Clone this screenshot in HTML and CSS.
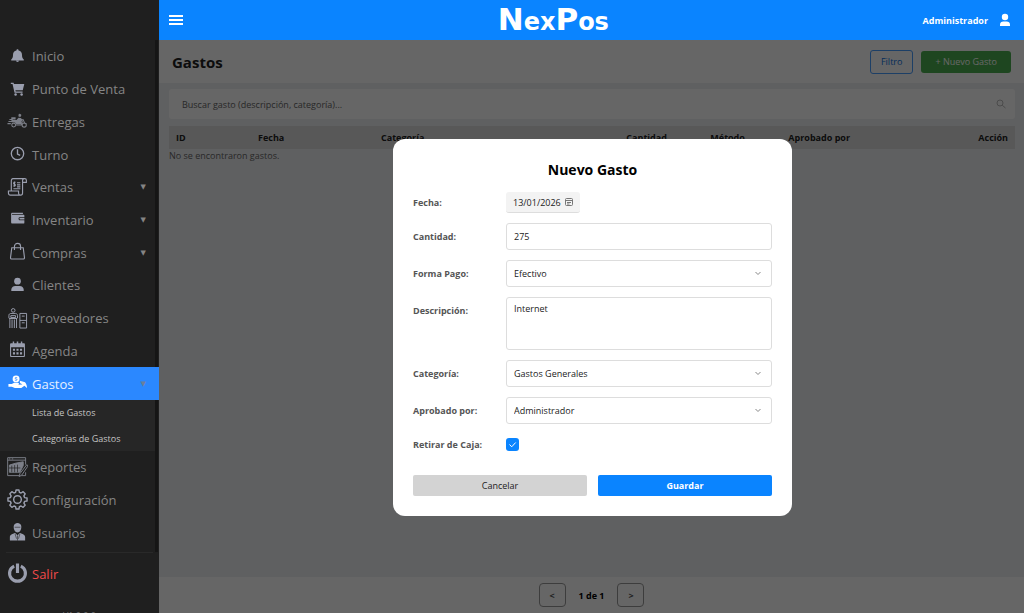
FILE: index.html
```html
<!DOCTYPE html>
<html lang="es">
<head>
    <meta charset="UTF-8">
    <meta name="viewport" content="width=device-width, initial-scale=1.0">
    <title>NexPos - Gastos</title>
    <link rel="stylesheet" href="styles.css">
</head>
<body>

    <aside class="sidebar">
        <nav class="menu">
            <a href="#" class="menu-item">
                <svg class="icon" viewBox="0 0 22 22"><path fill="currentColor" d="M11 3.500c.7 0 1.100.5 1.100 1.100 2.400.5 3.600 2.300 3.600 4.600 0 2.700.7 3.900 1.900 5v1H4.400v-1c1.200-1.100 1.900-2.300 1.900-5 0-2.300 1.200-4.100 3.600-4.600 0-.6.4-1.100 1.100-1.100zM9.500 15.500h3c0 .8-.6 1.200-1.500 1.200s-1.500-.4-1.500-1.200z"/></svg>
                <span>Inicio</span>
            </a>
            <a href="#" class="menu-item">
                <svg class="icon" viewBox="0 0 22 22"><path fill="currentColor" d="M4 4h2.900l.4 1.300h10.800l-1.600 6.500H8.800l.3 1.300h7.200v1.400H7.900L5.800 5.300H4z"/><circle cx="9" cy="16.300" r="1.300" fill="currentColor"/><circle cx="15.300" cy="16.300" r="1.300" fill="currentColor"/></svg>
                <span>Punto de Venta</span>
            </a>
            <a href="#" class="menu-item">
                <svg class="icon dim" viewBox="0 0 22 22"><g fill="none" stroke="currentColor" stroke-width="1.100"><circle cx="7" cy="14.700" r="2"/><circle cx="18" cy="14.700" r="2.200"/><path d="M1.500 11h5M2.500 9h3.500M.5 13.200h3.500M9.500 14.700h5.500l1-4-1.500-1.500M15 9.200h2l1.500 3.500 2 .8"/></g><path fill="currentColor" d="M3.500 11.500 5 9.500h5l2-2.500 2.500.3 2 2-2 .2 1 2.500-.5 2H9.700C9.400 12.300 8 11.800 6 11.800zM12 4.200a1.500 1.500 0 1 1 2.800 1l-1 1.100-1.700-.6zM4.500 6.500h4.500V9H4.500z"/></svg>
                <span>Entregas</span>
            </a>
            <a href="#" class="menu-item">
                <svg class="icon" viewBox="0 0 22 22" fill="none" stroke="currentColor" stroke-width="1.400"><circle cx="11" cy="10" r="6.500"/><path d="M11 5.500V10.500l2.800 1.500"/></svg>
                <span>Turno</span>
            </a>
            <a href="#" class="menu-item">
                <svg class="icon" viewBox="0 0 22 22" fill="none" stroke="currentColor" stroke-width="1.200"><path d="M4.500 14.500V4.200c0-1.300.6-2.500 1.700-2.500h12.300c1.200 0 1.800.8 1.800 1.700v2.300h-4V4c0-1 .5-2.300 1.700-2.300M16.300 5.700v11c0 1.500-.7 2.300-2 2.300H3.500c-1.200 0-2-.9-2-2.300v-2h10.600V17c0 1.300.9 2 2 2"/><path d="M9 5.500c-2.200-.4-2.700 1.500-1.200 2 1.600.5 1 2.300-1.200 1.800M7.800 4.700v5.500M10.500 6H14M10.500 8.300H14M6.700 12.300H14M10.500 10.300H14"/></svg>
                <span>Ventas</span>
                <span class="arrow">▼</span>
            </a>
            <a href="#" class="menu-item">
                <svg class="icon" viewBox="0 0 22 22"><path fill="currentColor" d="M5.500 4h11.200v1.300H5.300V6h12.200c.4 0 .7.300.7.700v1.700h-4.200c-1.300 0-1.900.8-1.900 1.700s.6 1.700 1.900 1.700h4.200v2.600c0 .6-.3.900-.9.900H5.600c-.8 0-1.300-.5-1.300-1.300V5.300c0-.8.500-1.300 1.200-1.300z"/><path fill="currentColor" d="M14 9.200h4.200v1.800H14c-1.300 0-1.300-1.800 0-1.800z"/></svg>
                <span>Inventario</span>
                <span class="arrow">▼</span>
            </a>
            <a href="#" class="menu-item">
                <svg class="icon" viewBox="0 0 22 22" fill="none" stroke="currentColor" stroke-width="1.200"><path d="M5 6h12l1.300 10.200c.1 1-.4 1.600-1.200 1.600H4.900c-.8 0-1.300-.6-1.200-1.600zM7.800 8.500V4.500c0-4 6.400-4 6.400 0v4"/></svg>
                <span>Compras</span>
                <span class="arrow">▼</span>
            </a>
            <a href="#" class="menu-item">
                <svg class="icon" viewBox="0 0 22 22" fill="currentColor"><circle cx="11" cy="6.500" r="3.500"/><path d="M4.500 16.700v-1.300c0-2.700 1.900-4 4.200-4h4.600c2.300 0 4.200 1.300 4.200 4v1.300z"/></svg>
                <span>Clientes</span>
            </a>
            <a href="#" class="menu-item">
                <svg class="icon" viewBox="0 0 22 22" fill="none" stroke="currentColor"><circle cx="6.500" cy="2.500" r="1.900"/><path d="M3 21v-9.500l-1-1V7.700c0-1.200 1-2 2-2h5c1 0 2 .8 2 2v2.800l-1 1V21M5.300 12v9M7.700 12v9M2.500 11h8M4 8h5v2H4zM13.500 5.700h7V21h-7zM13.500 13h7M15.500 8.500h3M15.500 15.500h3"/></svg>
                <span>Proveedores</span>
            </a>
            <a href="#" class="menu-item">
                <svg class="icon" viewBox="0 0 22 22"><path fill="currentColor" fill-rule="evenodd" d="M4.500 3.500H6V1.700h1.500v1.800h2.700V1.700h1.600v1.800h2.700V1.700H16v1.800h1.500c.9 0 1.300.5 1.300 1.300v11.700c0 .8-.5 1.300-1.300 1.300h-13c-.8 0-1.300-.5-1.300-1.300V4.800c0-.8.500-1.300 1.300-1.300zm-.2 4v8.700c0 .3.200.5.500.5h12.400c.3 0 .5-.2.500-.5V7.500z"/><path stroke="currentColor" stroke-width="2.200" stroke-dasharray="2.200 1.500" d="M6.200 10.200h9.600M6.200 14h9.600"/></svg>
                <span>Agenda</span>
            </a>
            <a href="#" class="menu-item active">
                <svg class="icon" viewBox="0 0 22 22"><path fill="currentColor" d="M1.500 11.500h3.500l2.500-1.300h3.700c1.500 0 2 1.700.5 2.100l3.800-.3 2.800-1.800c1.700.3 2.700 2.800 2.700 5.500l-2.800-2.300-3.200 2.300H8.200L5 14.500H1.500z"/><path fill="currentColor" d="m13.500 8 5.500 1.800 1.300 3-3-.3-3.800-2z"/><circle cx="9.500" cy="6.200" r="3.600" fill="currentColor"/><path fill="none" stroke="#2b88ff" stroke-width=".8" d="M10.700 4.900c-2.500-.7-3.200.9-1.200 1.300s1.200 2-1.200 1.300"/></svg>
                <span>Gastos</span>
                <span class="arrow">▼</span>
            </a>
            <div class="submenu">
                <a href="#">Lista de Gastos</a>
                <a href="#">Categorías de Gastos</a>
            </div>
            <a href="#" class="menu-item">
                <svg class="icon dim" viewBox="0 0 22 22" fill="none" stroke="currentColor"><path d="M19.500 8V.7H.7v18.800h18.800V16M.7 3.300h18.800M2 2h1.500M5 2h1.500"/><path fill="currentColor" d="M2.500 8.500 9 6.500l8-1.500v4l-3.500 7h-11z"/><path stroke="#1f1f1f" stroke-width=".7" d="M5 9v7M8 8.500V16M11 8v8M2 11.500h12"/><path fill="#1f1f1f" d="m20.800 8-7.300 9.500-.8 3 2.700-1.500 6.400-9.300z"/></svg>
                <span>Reportes</span>
            </a>
            <a href="#" class="menu-item">
                <svg class="icon" viewBox="0 0 22 22" fill="none" stroke="currentColor" stroke-width="1.500" stroke-linejoin="round"><circle cx="11" cy="11" r="4"/><path d="M9 3.500 9.500 1h3l.5 2.500 1.700.7 2.200-1.400L19 5l-1.300 2.200.7 1.800 2.600.5v3l-2.600.5-.7 1.800L19 17l-2.100 2.200-2.200-1.400-1.700.7-.5 2.500h-3L9 18.500l-1.700-.7-2.200 1.400L3 17l1.300-2.200-.7-1.800-2.600-.5v-3L3.600 9l.7-1.800L3 5l2.100-2.200 2.200 1.400z"/></svg>
                <span>Configuración</span>
            </a>
            <a href="#" class="menu-item">
                <svg class="icon" viewBox="0 0 22 22"><path fill="currentColor" d="M7 5c0-5.200 8-5.200 8 0 0 3.300-1.700 6-4 6S7 8.300 7 5z"/><path fill="currentColor" d="M3 19.500V16c0-2.700 2.700-3.500 5.500-4.400L11 13.800l2.500-2.200c2.800.9 5.500 1.700 5.500 4.400v3.500z"/><path stroke="#1f1f1f" stroke-width=".6" fill="none" d="M8 5.500h6M11 14v5.500M8.500 12.500l1.500 5M13.500 12.500l-1.500 5"/></svg>
                <span>Usuarios</span>
            </a>
        </nav>
        <div class="menu-exit">
            <a href="#" class="menu-item exit">
                <svg class="icon" viewBox="0 0 22 22" fill="none" stroke="currentColor" stroke-width="3.300"><path d="M7.500 3.200a8.300 8.300 0 1 0 7 0M11 .5v10"/></svg>
                <span>Salir</span>
            </a>
        </div>
        <div class="version">V1.0.0.0</div>
    </aside>

    <div class="page">
        <header class="navbar">
            <button type="button" class="menu-toggle" aria-label="Menú">
                <svg width="16" height="12" viewBox="0 0 16 12" stroke="#fff" stroke-width="2"><path d="M1 2h14M1 6h14M1 10h14"/></svg>
            </button>
            <div class="brand"><span class="big">N</span>ex<span class="big">P</span>os</div>
            <div class="user">
                <span>Administrador</span>
                <svg width="12" height="14" viewBox="0 0 12 14" fill="#fff"><circle cx="6" cy="4" r="3.200"/><path d="M1 13v-1.200C1 9.500 2.500 8.500 4.200 8.500h3.600c1.700 0 3.200 1 3.200 3.300V13z"/></svg>
            </div>
        </header>

        <main class="content">
            <div class="toolbar">
                <h1>Gastos</h1>
                <button type="button" class="btn-filter">Filtro</button>
                <button type="button" class="btn-new">+ Nuevo Gasto</button>
            </div>

            <div class="list">
                <label class="search">
                    <input type="text" placeholder="Buscar gasto (descripción, categoría)..." aria-label="Buscar gasto">
                    <svg width="10" height="10" viewBox="0 0 10 10" fill="none" stroke="#bbb"><circle cx="4" cy="4" r="3"/><path d="m6.200 6.200 3.300 2.800"/></svg>
                </label>
                <table class="expenses">
                    <thead>
                        <tr>
                            <th class="col-id">ID</th>
                            <th class="col-date">Fecha</th>
                            <th class="col-category">Categoría</th>
                            <th class="col-amount">Cantidad</th>
                            <th class="col-method">Método</th>
                            <th>Aprobado por</th>
                            <th class="col-action">Acción</th>
                        </tr>
                    </thead>
                    <tbody>
                        <tr>
                            <td colspan="7">No se encontraron gastos.</td>
                        </tr>
                    </tbody>
                </table>
            </div>

            <div class="pager">
                <button type="button">&lt;</button>
                <span>1 de 1</span>
                <button type="button">&gt;</button>
            </div>

            <!-- Modal -->
            <div class="overlay">
                <form class="modal" role="dialog" aria-labelledby="modalTitle">
                    <h2 id="modalTitle">Nuevo Gasto</h2>
                    <div class="fields">
                        <label for="fecha">Fecha:</label>
                        <div class="date-box">
                            <input type="text" id="fecha" value="13/01/2026">
                            <svg width="8" height="8" viewBox="0 0 8 8" fill="none" stroke="#777"><rect x=".5" y=".5" width="7" height="7" rx="1"/><path d="M.5 2.500h7M2 4.500h4M2 6h2.500"/></svg>
                        </div>

                        <label for="cantidad">Cantidad:</label>
                        <input type="text" id="cantidad" class="control" value="275">

                        <label for="formaPago">Forma Pago:</label>
                        <div class="select-box">
                            <select id="formaPago" class="control">
                                <option>Efectivo</option>
                            </select>
                            <svg class="chevron" viewBox="0 0 8 5"><path d="m1.500 1 2.500 2.500L6.500 1"/></svg>
                        </div>

                        <label for="descripcion" class="label-top">Descripción:</label>
                        <textarea id="descripcion" class="control">Internet</textarea>

                        <label for="categoria">Categoría:</label>
                        <div class="select-box">
                            <select id="categoria" class="control">
                                <option>Gastos Generales</option>
                            </select>
                            <svg class="chevron" viewBox="0 0 8 5"><path d="m1.500 1 2.500 2.500L6.500 1"/></svg>
                        </div>

                        <label for="aprobado">Aprobado por:</label>
                        <div class="select-box">
                            <select id="aprobado" class="control">
                                <option>Administrador</option>
                            </select>
                            <svg class="chevron" viewBox="0 0 8 5"><path d="m1.500 1 2.500 2.500L6.500 1"/></svg>
                        </div>

                        <label for="retirar">Retirar de Caja:</label>
                        <div class="check-box">
                            <input type="checkbox" id="retirar" checked>
                            <svg viewBox="0 0 13 13"><path d="m3.500 6.500 2.200 2.300 4-4.300"/></svg>
                        </div>
                    </div>
                    <div class="actions">
                        <button type="button" class="btn-cancel">Cancelar</button>
                        <button type="button" class="btn-save">Guardar</button>
                    </div>
                </form>
            </div>
        </main>
    </div>

</body>
</html>
```
FILE: styles.css
```css
* {
    box-sizing: border-box;
}
body {
    margin: 0;
    display: flex;
    height: 100vh;
    overflow: hidden;
    font-family: "Open Sans", "Noto Sans", sans-serif;
    font-size: 9px;
}
button, input, select, textarea {
    font: inherit;
}
a {
    text-decoration: none;
}

/* Sidebar */
.sidebar {
    width: 159px;
    flex-shrink: 0;
    display: flex;
    flex-direction: column;
    padding-top: 40px;
    background-color: #1f1f1f;
    overflow: hidden;
}
.menu {
    flex: 1;
    display: flex;
    flex-direction: column;
    margin-right: 1px;
    padding-bottom: 3px;
    border-right: 3px solid #151515;
}
.menu-item {
    flex: 1;
    display: flex;
    align-items: center;
    gap: 4px;
    padding: 0 9px 0 7px;
    color: #858585;
    font-size: 13px;
    line-height: 20px;
}
.icon {
    width: 21px;
    height: 21px;
    color: #9a9eae;
}
.icon.dim {
    color: #7c7f88;
}
.arrow {
    margin-left: auto;
    font-family: "DejaVu Sans", sans-serif;
    font-size: 7px;
}
.menu-item.active {
    margin-right: -4px;
    padding-right: 13px;
    background-color: #2b88ff;
    color: #e6f0ff;
}
.active .icon {
    color: #fff;
}
.active .arrow {
    color: #6c7f99;
}
.submenu {
    display: flex;
    flex-direction: column;
    height: 51px;
    background-color: #262626;
}
.submenu a {
    flex: 1;
    padding-left: 32px;
    color: #c4c4c4;
    font-size: 9px;
    line-height: 26px;
}
.menu-exit {
    display: flex;
    height: 42px;
    margin: 0 6px;
    border-top: 1px solid #292929;
}
.exit {
    padding: 0 1px;
    color: #f04a4a;
}
.version {
    height: 19px;
    padding-top: 16px;
    color: #777;
    font-size: 9px;
    line-height: 12px;
    text-align: center;
}

/* Top bar */
.page {
    flex: 1;
    display: flex;
    flex-direction: column;
    min-width: 0;
}
.navbar {
    display: flex;
    align-items: center;
    justify-content: space-between;
    height: 40px;
    padding: 0 13px 0 9px;
    background-color: #0a84ff;
    color: #fff;
}
.menu-toggle {
    display: flex;
    padding: 0;
    border: none;
    background: none;
}
.brand {
    font-family: "DejaVu Sans", sans-serif;
    font-size: 24px;
    font-weight: bold;
    line-height: 36px;
}
.brand .big {
    font-size: 31px;
}
.user {
    display: flex;
    align-items: center;
    gap: 11px;
    font-weight: bold;
}

/* Expense list */
.content {
    position: relative;
    flex: 1;
    display: flex;
    flex-direction: column;
    min-height: 0;
    background-color: #eef0f3;
}
.toolbar {
    display: flex;
    align-items: center;
    gap: 8px;
    height: 43px;
    padding: 0 13px;
    background-color: #fff;
}
.toolbar h1 {
    margin: 0 auto 0 0;
    color: #222;
    font-size: 15px;
}
.btn-filter {
    height: 24px;
    padding: 0 10px;
    border: 1px solid #4a9dff;
    border-radius: 3px;
    background-color: #fff;
    color: #0a6fe0;
}
.btn-new {
    height: 22px;
    padding: 0 14px;
    border: none;
    border-radius: 3px;
    background-color: #4caf50;
    color: #fff;
}
.list {
    flex: 1;
    padding: 6px 9px 0 10px;
}
.search {
    display: flex;
    align-items: center;
    height: 30px;
    margin-bottom: 7px;
    padding: 0 9px 0 13px;
    border-radius: 3px;
    background-color: #fff;
}
.search input {
    flex: 1;
    padding: 0;
    border: none;
    outline: none;
}
.search input::placeholder {
    color: #666;
}
.expenses {
    width: 100%;
    border-collapse: collapse;
    table-layout: fixed;
    line-height: 14px;
}
.expenses th {
    height: 23px;
    padding: 0 7px;
    background-color: #dcdcdc;
    color: #222;
    text-align: left;
}
.expenses td {
    padding: 0;
    color: #666;
}
.expenses .col-id {
    width: 82px;
}
.expenses .col-date {
    width: 123px;
}
.expenses .col-category {
    width: 29%;
}
.expenses .col-amount {
    width: 84px;
}
.expenses .col-method {
    width: 78px;
}
.expenses .col-action {
    text-align: right;
}
.pager {
    display: flex;
    align-items: center;
    justify-content: center;
    gap: 13px;
    height: 36px;
    background-color: #fff;
    font-weight: bold;
}
.pager button {
    width: 27px;
    height: 24px;
    padding: 0;
    border: 1px solid #999;
    border-radius: 4px;
    background-color: #fff;
    color: #555;
}

/* Modal */
.overlay {
    position: absolute;
    inset: 0;
    display: flex;
    align-items: center;
    justify-content: center;
    padding: 2px 0 0 2px;
    background-color: rgba(0, 0, 0, 0.6);
}
.modal {
    width: 399px;
    max-width: 100%;
    padding: 20px;
    border-radius: 12px;
    background-color: #fff;
}
.modal h2 {
    margin: 0 0 12px;
    font-size: 14px;
    line-height: 21px;
    text-align: center;
}
.fields {
    display: grid;
    grid-template-columns: 93px 1fr;
    gap: 10px 0;
    align-items: center;
}
.fields label {
    color: #555;
    font-weight: bold;
}
.fields .label-top {
    align-self: start;
    padding-top: 7px;
}
.date-box {
    display: flex;
    align-items: center;
    justify-self: start;
    width: 74px;
    height: 21px;
    padding: 0 7px;
    border-bottom: 1px solid #ddd;
    border-radius: 3px;
    background-color: #f3f3f3;
}
.date-box input {
    flex: 1;
    min-width: 0;
    padding: 0;
    border: none;
    background: none;
    color: #222;
}
.control {
    display: block;
    width: 100%;
    height: 27px;
    padding: 0 7px;
    border: 1px solid #ddd;
    border-radius: 3px;
    background-color: #fff;
    color: #222;
}
textarea.control {
    height: 53px;
    padding-top: 4px;
    resize: none;
}
.select-box, .check-box {
    display: grid;
    align-items: center;
}
.select-box > *, .check-box > * {
    grid-area: 1 / 1;
}
.select-box select {
    appearance: none;
}
.chevron {
    width: 8px;
    height: 5px;
    margin-right: 10px;
    justify-self: end;
    fill: none;
    stroke: #888;
    pointer-events: none;
}
.check-box {
    height: 20px;
    justify-content: start;
}
.check-box input {
    appearance: none;
    width: 13px;
    height: 13px;
    margin: 0;
    border-radius: 3px;
    background-color: #0a84ff;
}
.check-box svg {
    width: 13px;
    height: 13px;
    fill: none;
    stroke: #fff;
    pointer-events: none;
}
.actions {
    display: grid;
    grid-template-columns: 1fr 1fr;
    gap: 11px;
    margin-top: 21px;
}
.actions button {
    height: 21px;
    padding: 0;
    border: none;
    border-radius: 2px;
}
.btn-cancel {
    background-color: #d3d3d3;
    color: #222;
}
.btn-save {
    background-color: #0a84ff;
    color: #fff;
    font-weight: bold;
}
```
